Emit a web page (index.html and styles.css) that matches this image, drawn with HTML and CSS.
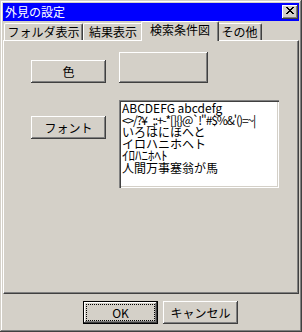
FILE: index.html
```html
<!DOCTYPE html>
<html lang="ja">
<head>
<meta charset="utf-8">
<title>外見の設定</title>
<link rel="stylesheet" href="styles.css">
</head>
<body>
<div class="window">
  <div class="titlebar">
    <span class="title">外見の設定</span>
    <button class="close" aria-label="閉じる">
      <svg width="8" height="7" viewBox="0 0 8 7" shape-rendering="crispEdges"><path fill="#000" d="M0 0h2v1h-2z M6 0h2v1h-2z M1 1h2v1h-2z M5 1h2v1h-2z M2 2h4v1h-4z M3 3h2v1h-2z M2 4h4v1h-4z M1 5h2v1h-2z M5 5h2v1h-2z M0 6h2v1h-2z M6 6h2v1h-2z"/></svg>
    </button>
  </div>
  <div class="tabs">
    <div class="tab t1">フォルダ表示</div>
    <div class="tab t2">結果表示</div>
    <div class="tab t3 sel">検索条件図</div>
    <div class="tab t4">その他</div>
  </div>
  <div class="panel">
    <div class="grid">
      <button class="btn color-btn">色</button>
      <div class="swatch"></div>
      <button class="btn font-btn">フォント</button>
      <div class="sample">
        <div class="line">ABCDEFG abcdefg</div>
        <div class="line sym">&lt;&gt;/?¥_;:+-*[]{}@`!"#$%&amp;'()=~|</div>
        <div class="line">いろはにほへと</div>
        <div class="line">イロハニホヘト</div>
        <div class="line hw">ｲﾛﾊﾆﾎﾍﾄ</div>
        <div class="line">人間万事塞翁が馬</div>
      </div>
    </div>
  </div>
  <div class="footer">
    <button class="btn ok"><span class="focus">OK</span></button>
    <button class="btn cancel">キャンセル</button>
  </div>
</div>
</body>
</html>
```
FILE: styles.css
```css
* { box-sizing: border-box; }
body {
  margin: 0;
  font-family: "Noto Sans CJK JP", sans-serif;
  font-size: 12px;
  color: #000;
}
.window {
  width: 302px;
  height: 332px;
  background: #d4d0c8;
  padding: 3px;
  display: flex;
  flex-direction: column;
  box-shadow: inset -1px -1px #404040, inset 1px 1px #d4d0c8, inset -2px -2px #808080, inset 2px 2px #fff;
}
.titlebar {
  height: 18px;
  background: #0000ff;
  color: #fff;
  display: flex;
  align-items: center;
  justify-content: space-between;
  padding: 0 1px 0 2px;
}
.title {
  font-size: 12px;
  line-height: 18px;
}
.close {
  width: 16px;
  height: 14px;
  border: 0;
  margin: 0;
  padding: 2px 0 0 0;
  background: #d4d0c8;
  display: flex;
  justify-content: center;
  align-items: flex-start;
  box-shadow: inset -1px -1px #404040, inset 1px 1px #fff, inset -2px -2px #808080;
}
.close svg { display: block; }
.tabs {
  height: 19px;
  display: flex;
  align-items: flex-end;
  padding-left: 1px;
}
.tab {
  height: 17px;
  line-height: 15px;
  text-align: center;
  white-space: nowrap;
  border-top: 1px solid #fff;
  border-left: 1px solid #fff;
  border-right: 1px solid #404040;
  border-radius: 2px 2px 0 0;
  box-shadow: inset -1px 0 #808080;
}
.t1 { width: 79px; }
.t2 { width: 60px; }
.t3 { width: 74px; }
.t4 { width: 45px; }
.tab.sel {
  position: relative;
  z-index: 1;
  height: 20px;
  width: 78px;
  margin: 0 -2px -1px -2px;
  line-height: 15px;
  background: #d4d0c8;
}
.panel {
  height: 254px;
  border-top: 1px solid #fff;
  border-left: 1px solid #fff;
  border-right: 1px solid #404040;
  border-bottom: 1px solid #404040;
  box-shadow: inset -1px -1px #808080;
}
.grid {
  display: grid;
  grid-template-columns: 75px 160px;
  grid-template-rows: 31px 88px;
  column-gap: 13px;
  row-gap: 17px;
  padding: 11px 0 0 27px;
}
.btn {
  font-family: "Noto Sans CJK JP", sans-serif;
  font-size: 12px;
  color: #000;
  width: 75px;
  height: 23px;
  border: 0;
  margin: 0;
  padding: 0;
  background: #d4d0c8;
  box-shadow: inset -1px -1px #404040, inset 1px 1px #fff, inset -2px -2px #808080, inset 2px 2px #d4d0c8;
}
.color-btn { align-self: end; }
.font-btn { align-self: start; margin-top: 16px; }
.swatch {
  width: 89px;
  height: 31px;
  box-shadow: inset -1px -1px #404040, inset 1px 1px #fff, inset -2px -2px #808080;
}
.sample {
  width: 160px;
  height: 88px;
  background: #fff;
  padding: 2px 3px;
  overflow: hidden;
  box-shadow: inset 1px 1px #808080, inset 2px 2px #404040, inset -1px -1px #fff, inset -2px -2px #d4d0c8;
}
.line {
  line-height: 12px;
  white-space: nowrap;
}
.line.sym {
  letter-spacing: -1.1px;
}
.line.hw {
  font-size: 13px;
  line-height: 10px;
  padding-bottom: 2px;
}
.footer {
  display: flex;
  gap: 5px;
  padding: 7px 0 0 80px;
}
.ok {
  border: 1px solid #000;
  padding: 3px;
  display: flex;
}
.focus {
  flex: 1;
  outline: 1px dotted #000;
  display: flex;
  align-items: center;
  justify-content: center;
}
```
